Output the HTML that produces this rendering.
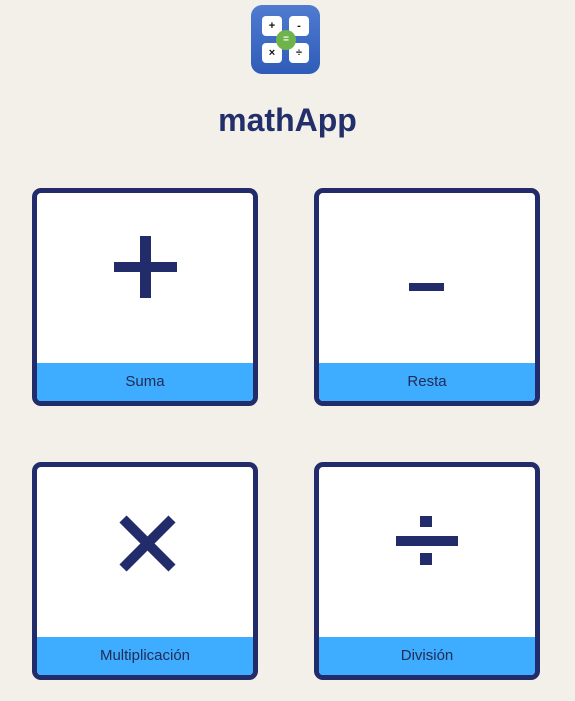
<!DOCTYPE html>
<html><head><style>
body{margin:0;background:#f3f0ea;width:575px;height:701px;position:relative;overflow:hidden;font-family:"Liberation Sans",sans-serif}
.logo{position:absolute;left:251px;top:5px;width:69px;height:69px;border-radius:11px;background:linear-gradient(#4f7bd0,#2f5cb8)}
.k{position:absolute;width:20px;height:20px;background:#fff;border-radius:4px;font:bold 11px "Liberation Sans";color:#111;text-align:center;line-height:20px}
.eq{position:absolute;left:25px;top:25px;width:20px;height:20px;border-radius:50%;background:#6fb44a;color:#fff;font:bold 10px "Liberation Sans";text-align:center;line-height:20px}
h1{position:absolute;top:102px;left:0;width:575px;margin:0;text-align:center;font-size:32px;font-weight:bold;color:#222f6b}
.card{position:absolute;width:216px;height:208px;border:5px solid #222c6a;border-radius:9px;background:#fff;overflow:hidden}
.band{position:absolute;left:0;right:0;bottom:0;height:38px;background:#3eacff;color:#222c55;font-size:15px;text-align:center;line-height:38px}
svg{position:absolute;left:0;top:0}
</style></head><body>
<div class="logo">
<div class="k" style="left:11px;top:11px">+</div><div class="k" style="left:38px;top:11px">-</div>
<div class="k" style="left:11px;top:38px">×</div><div class="k" style="left:38px;top:38px">÷</div>
<div class="eq">=</div></div>
<h1>mathApp</h1>
<div class="card" style="left:32px;top:188px"><svg width="216" height="208"><rect x="103" y="43" width="11" height="62" fill="#222c6a"/><rect x="77" y="69" width="63" height="10" fill="#222c6a"/></svg><div class="band">Suma</div></div>
<div class="card" style="left:314px;top:188px"><svg width="216" height="208"><rect x="90" y="90" width="35" height="8" fill="#222c6a"/></svg><div class="band">Resta</div></div>
<div class="card" style="left:32px;top:462px"><svg width="216" height="208"><path d="M86 52 L135 101 M135 52 L86 101" stroke="#222c6a" stroke-width="10"/></svg><div class="band">Multiplicación</div></div>
<div class="card" style="left:314px;top:462px"><svg width="216" height="208"><rect x="77" y="69" width="62" height="10" fill="#222c6a"/><rect x="101" y="49" width="12" height="11" fill="#222c6a"/><rect x="101" y="86" width="12" height="12" fill="#222c6a"/></svg><div class="band">División</div></div>
</body></html>
